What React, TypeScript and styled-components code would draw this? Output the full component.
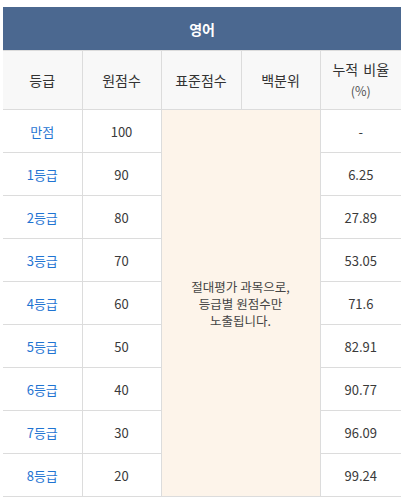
import styled, { createGlobalStyle } from 'styled-components';

interface GradeRow {
    grade: string;
    raw: number;
    ratio: string;
}

const ROWS: GradeRow[] = [
    { grade: '만점', raw: 100, ratio: '-' },
    { grade: '1등급', raw: 90, ratio: '6.25' },
    { grade: '2등급', raw: 80, ratio: '27.89' },
    { grade: '3등급', raw: 70, ratio: '53.05' },
    { grade: '4등급', raw: 60, ratio: '71.6' },
    { grade: '5등급', raw: 50, ratio: '82.91' },
    { grade: '6등급', raw: 40, ratio: '90.77' },
    { grade: '7등급', raw: 30, ratio: '96.09' },
    { grade: '8등급', raw: 20, ratio: '99.24' },
];

const NOTICE_LINES = ['절대평가 과목으로,', '등급별 원점수만', '노출됩니다.'];

const GlobalStyle = createGlobalStyle`
    body {
        margin: 0;
        background: #fff;
        font-family: "Noto Sans CJK KR", "Noto Sans", sans-serif;
    }
`;

const App = () => {
    return <>
        <GlobalStyle />
        <Wrapper>
            <ScoreTable>
                <colgroup>
                    <col style={{ width: 79 }} />
                    <col style={{ width: 79 }} />
                    <col style={{ width: 80 }} />
                    <col style={{ width: 79 }} />
                    <col style={{ width: 81 }} />
                </colgroup>
                <thead>
                    <tr>
                        <SubjectCell colSpan={5}>영어</SubjectCell>
                    </tr>
                    <tr>
                        <HeadCell>등급</HeadCell>
                        <HeadCell>원점수</HeadCell>
                        <HeadCell>표준점수</HeadCell>
                        <HeadCell>백분위</HeadCell>
                        <HeadCell>누적 비율<br /><small>(%)</small></HeadCell>
                    </tr>
                </thead>
                <tbody>
                    {
                        ROWS.map((row, i) => <tr key={row.grade}>
                            <GradeCell>{row.grade}</GradeCell>
                            <Cell>{row.raw}</Cell>
                            {
                                i === 0 && <NoticeCell colSpan={2} rowSpan={ROWS.length}>
                                    {
                                        NOTICE_LINES.map(line => <NoticeLine key={line}>{line}</NoticeLine>)
                                    }
                                </NoticeCell>
                            }
                            <Cell>{row.ratio}</Cell>
                        </tr>)
                    }
                </tbody>
            </ScoreTable>
        </Wrapper>
    </>;
};

const Wrapper = styled.div`
    padding: 7px 6px 0 3px;
`;

const ScoreTable = styled.table`
    width: 398px;
    border-collapse: collapse;
    table-layout: fixed;
    border-top: 1px solid #7a7a7a;
    font-size: 13px;
    color: #3a3a3a;

    td, th {
        border: 1px solid #dcdcdc;
        text-align: center;
        padding: 0;
    }

    tr > :first-child {
        border-left: none;
    }

    tr > :last-child {
        border-right: none;
    }
`;

const SubjectCell = styled.th`
    height: 42px;
    background-color: #4b6890;
    color: #fff;
    font-size: 14px;
    font-weight: bold;
    && {
        border-color: #4b6890;
        border-bottom-color: #dcdcdc;
    }
`;

const HeadCell = styled.th`
    height: 58px;
    background-color: #f8f8f8;
    font-weight: normal;
    font-size: 14px;
    line-height: 21px;
    color: #333;
    word-spacing: 2px;

    small {
        font-size: 12.5px;
        color: #555;
    }
`;

const Cell = styled.td`
    height: 42px;
    background-color: #fff;
`;

const GradeCell = styled(Cell)`
    color: #1f74d2;
`;

const NoticeCell = styled.td`
    background-color: #fdf4ea;
    color: #444;
    font-size: 12.5px;
`;

const NoticeLine = styled.div`
    height: 17px;
    line-height: 17px;
    overflow: visible;
`;

export default App;
